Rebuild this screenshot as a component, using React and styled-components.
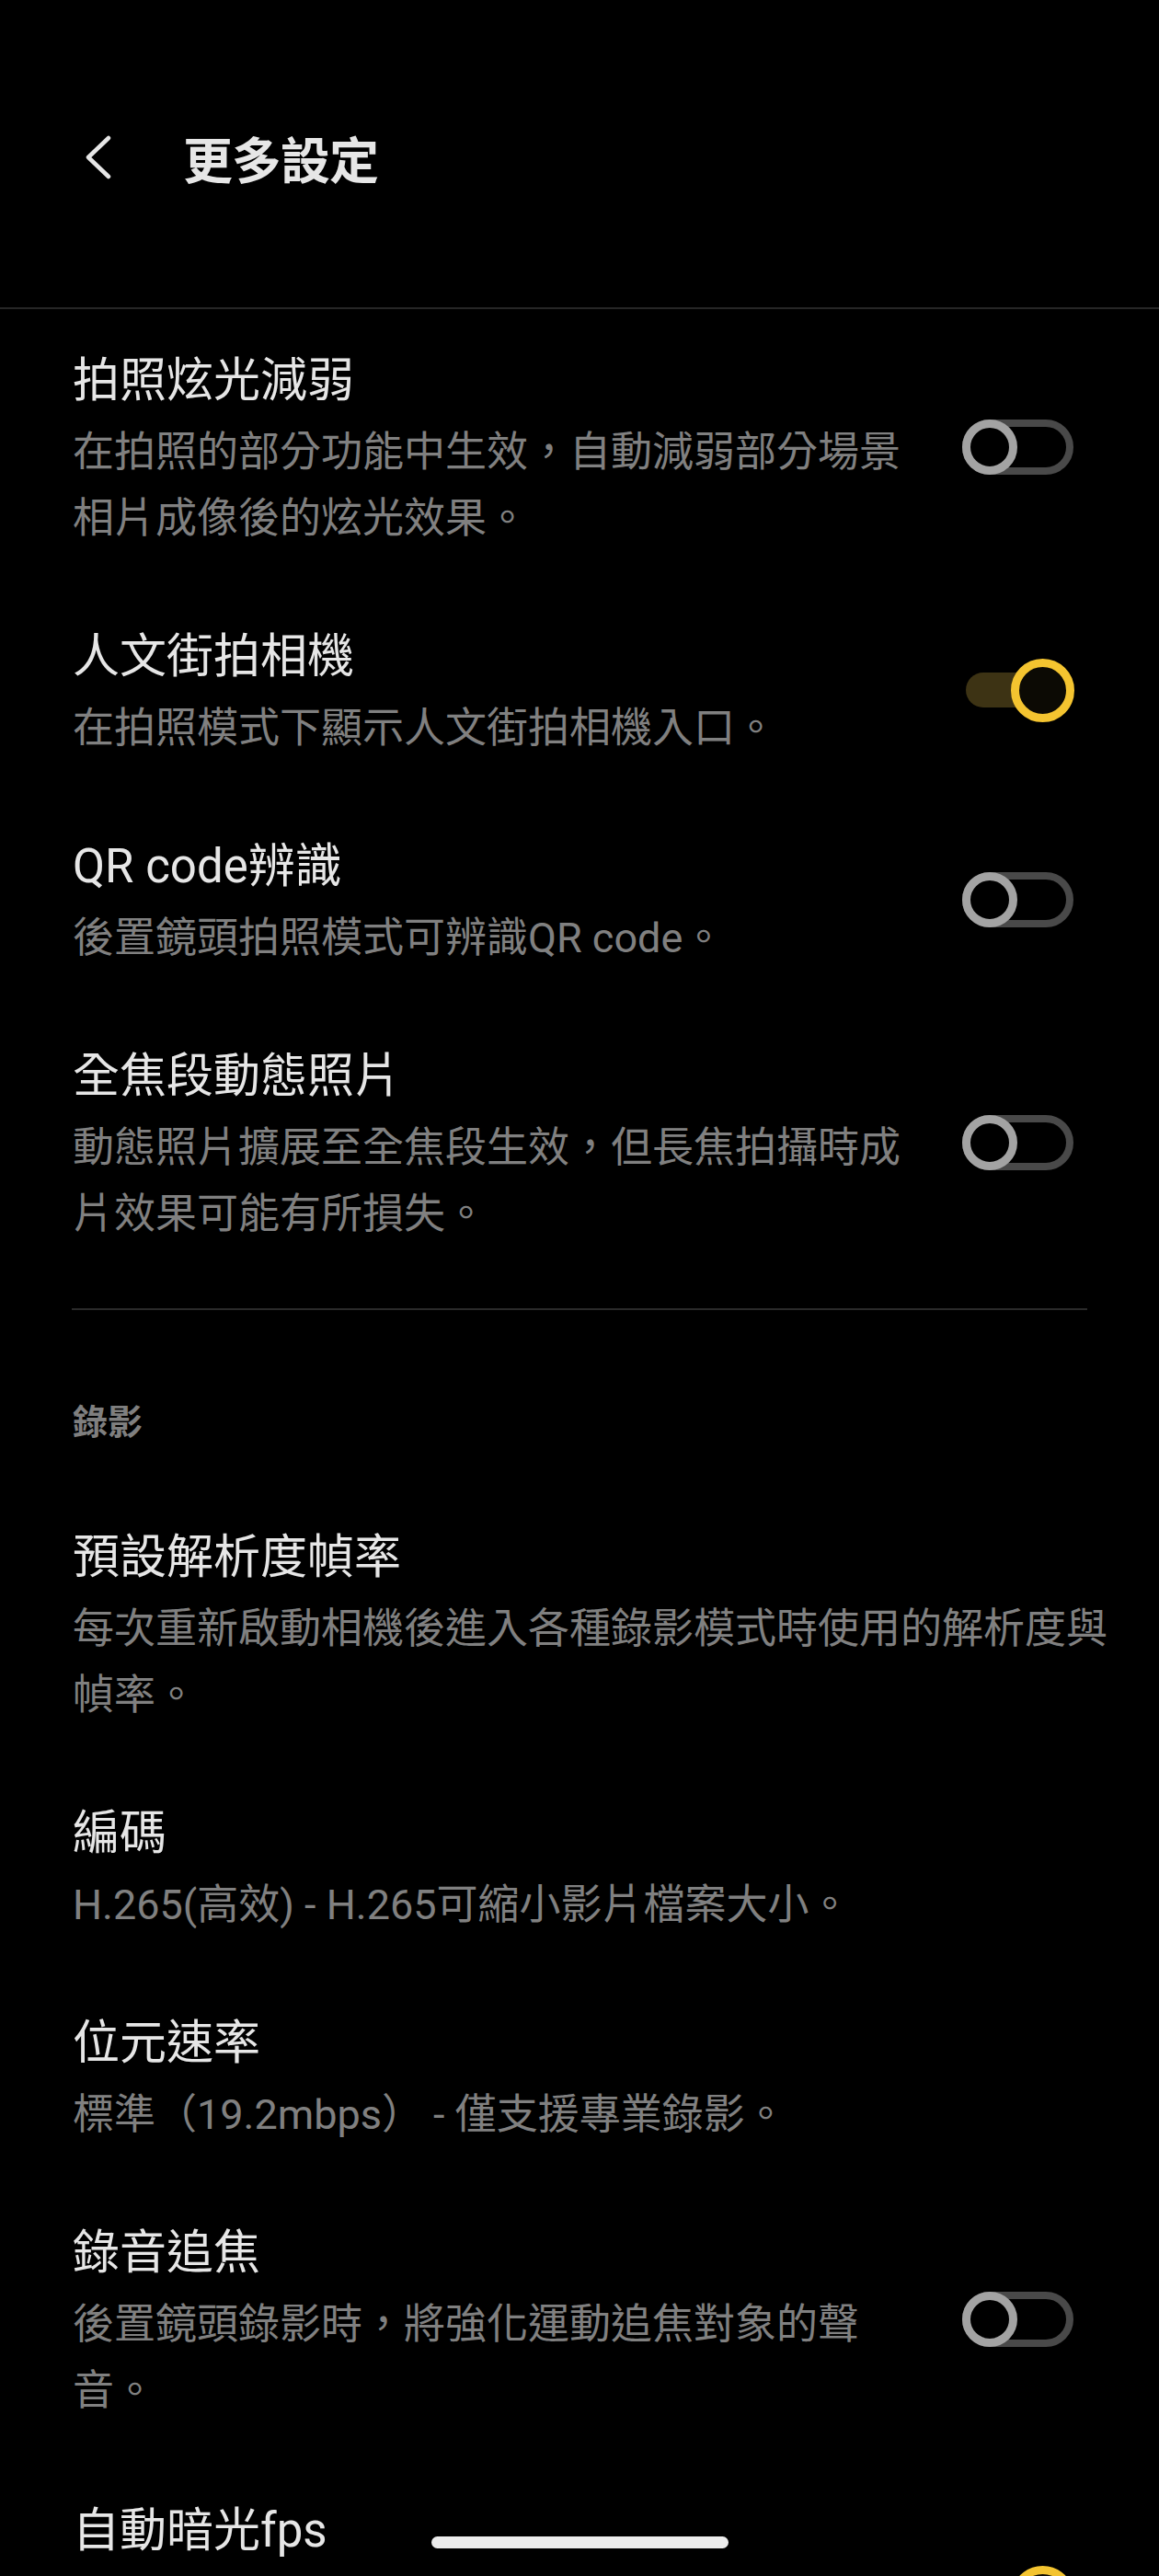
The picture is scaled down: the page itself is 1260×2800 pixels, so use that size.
import React from 'react'
import styled, { createGlobalStyle } from 'styled-components'

const GlobalStyle = createGlobalStyle`
  html, body {
    margin: 0;
    padding: 0;
    background: #000;
  }
  * {
    box-sizing: border-box;
  }
`;

const Page = styled.div`
  width: 1260px;
  min-height: 2800px;
  background: #000;
  font-family: Roboto, "Noto Sans CJK TC", "Noto Sans", sans-serif;
  color: #e6e6e6;
  overflow: hidden;
`;

const Header = styled.header`
  height: 336px;
  padding: 8px 0 0 92px;
  display: flex;
  align-items: center;
  border-bottom: 2px solid #262626;
`;

const BackButton = styled.button`
  width: 30px;
  height: 48px;
  padding: 0;
  margin-right: 77px;
  border: none;
  background: none;
  display: flex;
  align-items: center;
  justify-content: center;
`;

const HeaderTitle = styled.h1`
  margin: 0;
  font-size: 54px;
  font-weight: 700;
  color: #e6e6e6;
  letter-spacing: -1px;
`;

const List = styled.div`
  padding: 0 40px 0 79px;
`;

const Row = styled.div`
  display: flex;
  align-items: center;
  padding: 36px 0 ${p => (p.$loose ? '38px' : '36px')};
`;

const TextBlock = styled.div`
  flex: 1;
  min-width: 0;
`;

const Title = styled.div`
  font-size: 51px;
  line-height: 84px;
  color: #e6e6e6;
`;

const Desc = styled.div`
  font-size: 45px;
  line-height: 72px;
  color: #808080;
`;

const Divider = styled.div`
  height: 2px;
  background: #2a2a2a;
  margin: 30px 38px 0 -1px;
`;

const SectionLabel = styled.div`
  font-size: 38px;
  font-weight: 700;
  line-height: 50px;
  color: #7f7f7f;
  padding: 97px 0 44px;
`;

const SwitchBox = styled.div`
  position: relative;
  flex-shrink: 0;
  width: 121px;
  height: 69px;
  margin: 0 53px 0 46px;
`;

const Track = styled.div`
  position: absolute;
  left: ${p => (p.$on ? '4px' : '0')};
  top: ${p => (p.$on ? '15.5px' : '4.5px')};
  width: ${p => (p.$on ? '108px' : '121px')};
  height: ${p => (p.$on ? '38px' : '60px')};
  border-radius: 30px;
  background: ${p => (p.$on ? '#3d3314' : 'transparent')};
  border: ${p => (p.$on ? 'none' : '8px solid #494949')};
`;

const Thumb = styled.div`
  position: absolute;
  left: ${p => (p.$on ? '53px' : '0')};
  top: ${p => (p.$on ? '0' : '4.5px')};
  width: ${p => (p.$on ? '69px' : '60px')};
  height: ${p => (p.$on ? '69px' : '60px')};
  border-radius: 50%;
  background: ${p => (p.$on ? '#0c0a04' : '#000')};
  border: 9px solid ${p => (p.$on ? '#f4c430' : '#a3a3a3')};
`;

const HomeIndicator = styled.div`
  position: fixed;
  left: 50%;
  bottom: 30px;
  width: 323px;
  height: 13px;
  margin-left: -161px;
  border-radius: 7px;
  background: #ececec;
`;

const Switch = ({ on }) => (
  <SwitchBox>
    <Track $on={on} />
    <Thumb $on={on} />
  </SwitchBox>
)

const Item = ({ title, desc, toggle, loose }) => (
  <Row $loose={loose}>
    <TextBlock>
      <Title>{title}</Title>
      {desc && <Desc>{desc}</Desc>}
    </TextBlock>
    {toggle !== undefined && <Switch on={toggle} />}
  </Row>
)

const photoItems = [
  { title: '拍照炫光減弱', desc: '在拍照的部分功能中生效，自動減弱部分場景相片成像後的炫光效果。', toggle: false },
  { title: '人文街拍相機', desc: '在拍照模式下顯示人文街拍相機入口。', toggle: true },
  { title: 'QR code辨識', desc: '後置鏡頭拍照模式可辨識QR code。', toggle: false },
  { title: '全焦段動態照片', desc: '動態照片擴展至全焦段生效，但長焦拍攝時成片效果可能有所損失。', toggle: false },
];

const videoItems = [
  { title: '預設解析度幀率', desc: '每次重新啟動相機後進入各種錄影模式時使用的解析度與幀率。' },
  { title: '編碼', desc: 'H.265(高效) - H.265可縮小影片檔案大小。' },
  { title: '位元速率', desc: '標準（19.2mbps） - 僅支援專業錄影。' },
  { title: '錄音追焦', desc: '後置鏡頭錄影時，將強化運動追焦對象的聲音。', toggle: false, loose: true },
  { title: '自動暗光fps', desc: '暗光環境下錄影時自動降低幀率，以提升畫面亮度與清晰度。', toggle: true },
];

export default function App() {
  return (
    <Page>
      <GlobalStyle />
      <Header>
        <BackButton aria-label="返回">
          <svg width="30" height="48" viewBox="0 0 30 48">
            <polyline points="26,3 4,24 26,45" fill="none" stroke="#e6e6e6"
              strokeWidth="4.5" strokeLinecap="round" strokeLinejoin="round" />
          </svg>
        </BackButton>
        <HeaderTitle>更多設定</HeaderTitle>
      </Header>
      <List>
        {photoItems.map((it, idx) => (
          <Item key={`photo${idx}`} {...it} />
        ))}
        <Divider />
        <SectionLabel>錄影</SectionLabel>
        {videoItems.map((it, idx) => (
          <Item key={`video${idx}`} {...it} />
        ))}
      </List>
      <HomeIndicator />
    </Page>
  )
}
